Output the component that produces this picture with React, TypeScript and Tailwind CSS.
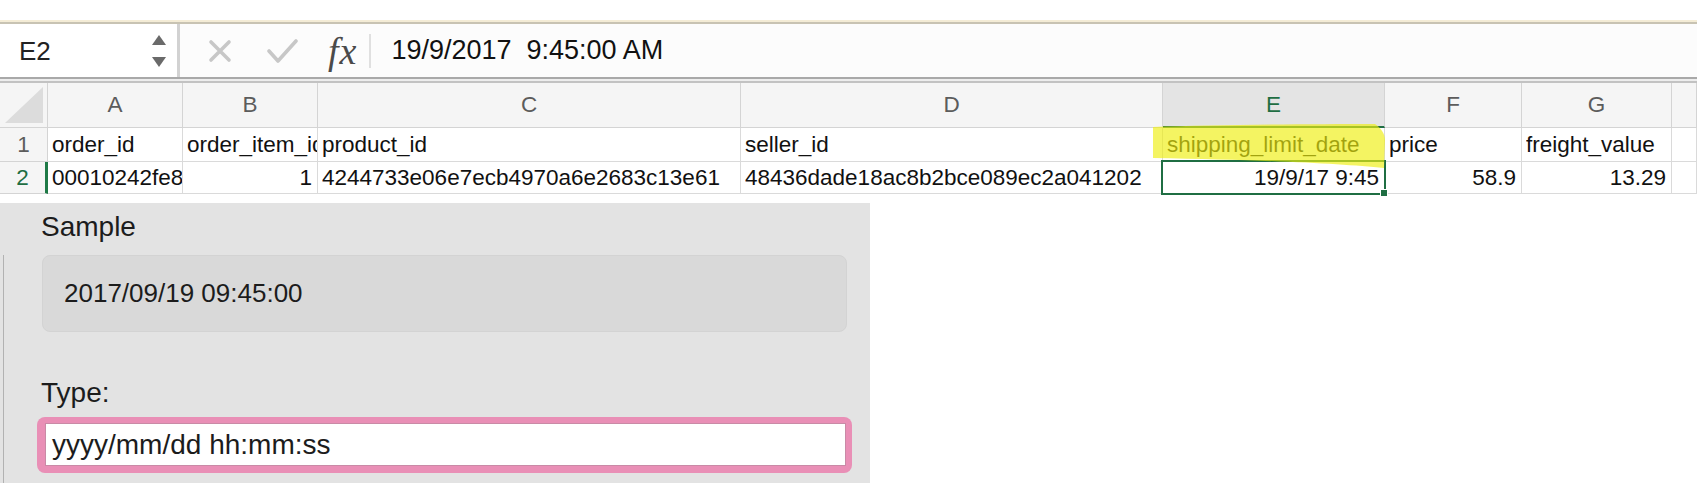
import { Fragment } from "react";

const columns = ["A", "B", "C", "D", "E", "F", "G", ""];

type Cell = { text: string; align?: "left" | "right" };

const rows: { label: string; cells: Cell[] }[] = [
  {
    label: "1",
    cells: [
      { text: "order_id" },
      { text: "order_item_id" },
      { text: "product_id" },
      { text: "seller_id" },
      { text: "shipping_limit_date" },
      { text: "price" },
      { text: "freight_value" },
      { text: "" },
    ],
  },
  {
    label: "2",
    cells: [
      { text: "00010242fe8c5a6d1ba2dd792cb16214" },
      { text: "1", align: "right" },
      { text: "4244733e06e7ecb4970a6e2683c13e61" },
      { text: "48436dade18ac8b2bce089ec2a041202" },
      { text: "19/9/17 9:45", align: "right" },
      { text: "58.9", align: "right" },
      { text: "13.29", align: "right" },
      { text: "" },
    ],
  },
];

function NameSpinner() {
  return (
    <svg width="16" height="34" viewBox="0 0 16 34" className="shrink-0">
      <polygon points="8,1 15,11 1,11" fill="#6a6a6a" />
      <polygon points="1,23 15,23 8,33" fill="#6a6a6a" />
    </svg>
  );
}

function CancelIcon() {
  return (
    <svg width="24" height="24" viewBox="0 0 24 24">
      <path d="M3 3 L21 21 M21 3 L3 21" stroke="#c7c7c7" strokeWidth="3.6" strokeLinecap="round" />
    </svg>
  );
}

function ConfirmIcon() {
  return (
    <svg width="31" height="26" viewBox="0 0 31 26">
      <path d="M2 13 L11 23 L29 3" fill="none" stroke="#c7c7c7" strokeWidth="3.6" strokeLinecap="round" strokeLinejoin="round" />
    </svg>
  );
}

function Highlighter() {
  return (
    <svg
      width="240"
      height="50"
      viewBox="0 0 240 50"
      className="pointer-events-none absolute left-[-12px] top-[-6px] z-20"
    >
      <path
        d="M2 5 C60 3 150 2 224 2 C230 6 234 12 234 18 L233 46 C190 42 120 38 2 36 Z"
        fill="#eeee10"
        opacity="0.66"
      />
    </svg>
  );
}

export default function App() {
  return (
    <div className="h-[489px] w-[1697px] overflow-hidden bg-white font-['Liberation_Sans',Arial,sans-serif] text-[#111]">
      <div className="h-[20px]" />
      <div className="h-[2px] bg-[#f4ecd6]" />
      <div className="h-[2px] bg-[#c8c3b3]" />

      {/* formula bar */}
      <div className="flex h-[53px] items-center bg-[#fcfcfc]">
        <div className="flex h-full w-[180px] items-center justify-between border-r-[3px] border-[#d2d2d2] bg-white pl-[19px] pr-[10px]">
          <span className="text-[26px] leading-none text-[#222]">E2</span>
          <NameSpinner />
        </div>
        <div className="ml-[28px] flex items-center">
          <CancelIcon />
        </div>
        <div className="ml-[35px] flex items-center">
          <ConfirmIcon />
        </div>
        <span className="ml-[30px] font-['Liberation_Serif',serif] text-[38px] italic leading-none tracking-[1px] text-[#4a4a4a]">
          fx
        </span>
        <div className="ml-[12px] h-[34px] w-[2px] bg-[#e0e0e0]" />
        <span className="ml-[20px] whitespace-pre text-[27px] leading-none text-[#111]">19/9/2017  9:45:00 AM</span>
      </div>
      <div className="h-[2px] bg-[#a9a9a9]" />
      <div className="h-[2px] bg-[#ededed]" />
      <div className="h-[2px] bg-[#c2c2c2]" />

      {/* sheet grid */}
      <div className="grid grid-cols-[48px_135px_135px_423px_422px_222px_137px_150px_1fr] grid-rows-[45px_34px_32px] text-[22.5px]">
        <div className="flex items-end justify-end border-b border-r border-[#d4d4d4] bg-[#f5f5f5] pb-[4px] pr-[4px]">
          <svg width="38" height="36" viewBox="0 0 38 36">
            <polygon points="38,0 38,36 0,36" fill="#dcdcdc" />
          </svg>
        </div>
        {columns.map((col) => {
          const active = col === "E";
          return (
            <div
              key={`h-${col || "H"}`}
              className={
                active
                  ? "flex items-center justify-center border-b-2 border-r border-b-[#1f6e43] border-r-[#d4d4d4] bg-[#e4e4e4] text-[#1f6e43]"
                  : "flex items-center justify-center border-b border-r border-[#d4d4d4] bg-[#f5f5f5] text-[#5c5c5c]"
              }
            >
              {col}
            </div>
          );
        })}

        {rows.map((row) => (
          <Fragment key={row.label}>
            <div
              className={
                row.label === "2"
                  ? "flex items-center justify-center border-b border-r-[3px] border-b-[#d4d4d4] border-r-[#1f7a47] bg-[#f5f5f5] text-[#1f6e43]"
                  : "flex items-center justify-center border-b border-r border-[#d4d4d4] bg-[#f5f5f5] text-[#5c5c5c]"
              }
            >
              {row.label}
            </div>
            {row.cells.map((cell, i) => {
              const isE = i === 4;
              return (
                <div
                  key={`${row.label}-${i}`}
                  className={
                    cell.align === "right"
                      ? "relative flex min-w-0 items-center justify-end border-b border-r border-[#dadada] bg-white pr-[5px]"
                      : "relative flex min-w-0 items-center justify-start border-b border-r border-[#dadada] bg-white pl-[4px]"
                  }
                >
                  <span className="min-w-0 overflow-hidden whitespace-nowrap leading-[28px]">{cell.text}</span>
                  {isE && row.label === "1" && <Highlighter />}
                  {isE && row.label === "2" && (
                    <>
                      <div className="pointer-events-none absolute inset-[-2px] z-10 border-2 border-[#1f6e43]" />
                      <div className="absolute bottom-[-4px] right-[-4px] z-20 h-[8px] w-[8px] border border-white bg-[#1f6e43]" />
                    </>
                  )}
                </div>
              );
            })}
          </Fragment>
        ))}
      </div>

      <div className="h-[9px]" />

      {/* format panel */}
      <div className="flex h-[280px] w-[870px] bg-[#e3e3e3] text-[28px] text-[#1c1c1c]">
        <div className="flex w-[4px] flex-col pt-[52px]">
          <div className="flex-1 border-r border-[#b2b2b2]" />
        </div>
        <div className="flex flex-1 flex-col pl-[33px] pt-[8px]">
          <div className="ml-[4px] h-[32px] leading-[32px]">Sample</div>
          <div className="ml-[5px] mt-[12px] flex h-[77px] w-[805px] items-center rounded-[8px] border border-[#d3d3d3] bg-[#d9d9d9] pl-[21px] text-[26px]">
            2017/09/19 09:45:00
          </div>
          <div className="ml-[4px] mt-[45px] h-[32px] leading-[32px]">Type:</div>
          <div className="mt-[8px] h-[56px] w-[815px] rounded-[8px] bg-[#e98fb6] pb-[7px] pl-[8px] pr-[6px] pt-[6px]">
            <div className="flex h-full items-center border border-[#c98aa6] bg-white pl-[6px]">
              yyyy/mm/dd hh:mm:ss
            </div>
          </div>
        </div>
      </div>
    </div>
  );
}
